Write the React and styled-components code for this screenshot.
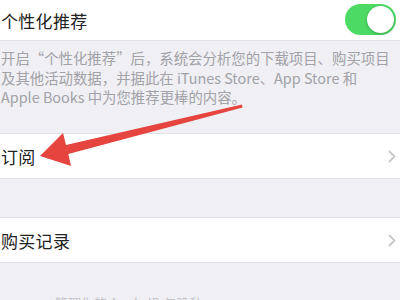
import React from 'react';
import styled, { createGlobalStyle } from 'styled-components';

const GlobalStyle = createGlobalStyle`
  html, body {
    margin: 0;
    padding: 0;
    background: #efeff4;
  }
  body {
    font-family: "Noto Sans CJK SC", "Liberation Sans", sans-serif;
  }
`;

const Screen = styled.div`
  position: relative;
  width: 400px;
  height: 300px;
  overflow: hidden;
  background: #efeff4;
  display: flex;
  flex-direction: column;
`;

const Row = styled.div`
  height: ${p => p.$h || 44}px;
  background: #fff;
  display: flex;
  align-items: center;
  justify-content: space-between;
  padding: 0 4px 0 1px;
  border-top: ${p => (p.$noTop ? 'none' : '1px solid #e2e2e6')};
  border-bottom: 1px solid #e2e2e6;
  box-sizing: border-box;
  flex-shrink: 0;
`;

const Label = styled.span`
  font-size: 17px;
  color: #222;
  letter-spacing: 0.3px;
`;

const Footnote = styled.div`
  padding: 7px 0 0 1px;
  height: ${p => p.$h}px;
  box-sizing: border-box;
  font-size: 14.4px;
  line-height: 19.5px;
  color: #a2a2a7;
  flex-shrink: 0;
  white-space: nowrap;
`;

const Gap = styled.div`
  height: ${p => p.$h}px;
  flex-shrink: 0;
`;

const Toggle = styled.div`
  width: 51px;
  height: 31px;
  border-radius: 16px;
  background: #4cd964;
  position: relative;
  margin-top: -2px;
`;

const Knob = styled.div`
  position: absolute;
  top: 2px;
  right: 2px;
  width: 27px;
  height: 27px;
  border-radius: 50%;
  background: #fff;
  box-shadow: 0 1px 3px rgba(0, 0, 0, 0.25);
`;

const Chevron = () => (
  <svg width="8" height="13" viewBox="0 0 8 13">
    <path d="M1 1 L6.5 6.5 L1 12" fill="none" stroke="#c7c7cc" strokeWidth="1.8" />
  </svg>
);

const FadedText = styled.div`
  padding-left: 55px;
  font-size: 13px;
  color: #c4c4c8;
  margin-top: 30px;
`;

const ArrowLayer = styled.svg`
  position: absolute;
  left: 0;
  top: 0;
  pointer-events: none;
`;

export default function App() {
  return (
    <>
      <GlobalStyle />
      <Screen>
        <Row $h={41} $noTop>
          <Label>个性化推荐</Label>
          <Toggle>
            <Knob />
          </Toggle>
        </Row>
        <Footnote $h={92}>
          开启“个性化推荐”后，系统会分析您的下载项目、购买项目
          <br />
          及其他活动数据，并据此在 iTunes Store、App Store 和
          <br />
          Apple Books 中为您推荐更棒的内容。
        </Footnote>
        <Row $h={46}>
          <Label>订阅</Label>
          <Chevron />
        </Row>
        <Gap $h={38} />
        <Row $h={46}>
          <Label>购买记录</Label>
          <Chevron />
        </Row>
        <FadedText>管理你的 Apple ID 与隐私</FadedText>
        <ArrowLayer width="400" height="300" viewBox="0 0 400 300">
          <polygon
            points="40,156 63,133 66,145 242,104.5 242.5,107.5 68.3,154 71,166"
            fill="#e5443f"
          />
        </ArrowLayer>
      </Screen>
    </>
  );
}
